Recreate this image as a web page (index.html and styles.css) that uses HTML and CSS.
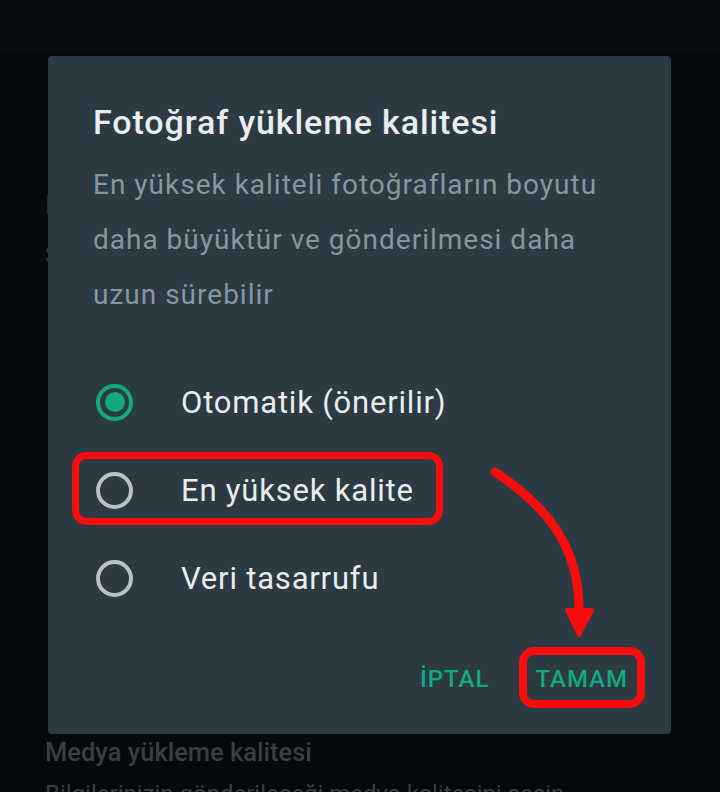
FILE: index.html
```html
<!DOCTYPE html>
<html lang="tr">

<head>
    <meta charset="UTF-8">
    <meta name="viewport" content="width=device-width, initial-scale=1.0">
    <title>Fotoğraf yükleme kalitesi</title>
    <link rel="stylesheet" href="styles.css">
</head>

<body>
    <div class="screen">
        <div class="toolbar"></div>
        <div class="setting">
            <div class="setting-title">Fotoğraf yükleme kalitesi</div>
            <div class="setting-sub">Standart</div>
        </div>
        <div class="section">Medya yükleme kalitesi</div>
        <div class="section-sub">Bilgilerinizin gönderileceği medya kalitesini seçin</div>
    </div>

    <div class="dialog">
        <h2 class="dialog-title">Fotoğraf yükleme kalitesi</h2>
        <p class="dialog-text">En yüksek kaliteli fotoğrafların boyutu daha büyüktür ve gönderilmesi daha uzun sürebilir</p>

        <div class="options">
            <div class="option"><span class="radio checked"></span>Otomatik (önerilir)</div>
            <div class="option"><span class="radio"></span>En yüksek kalite</div>
            <div class="option"><span class="radio"></span>Veri tasarrufu</div>
        </div>

        <div class="actions">
            <button class="action">İPTAL</button>
            <button class="action">TAMAM</button>
        </div>
    </div>

    <!-- red markup drawn over the screenshot -->
    <svg class="markup" width="720" height="792" viewBox="0 0 720 792">
        <rect x="75.5" y="455.5" width="364" height="66" rx="11" fill="none" stroke="#f70d0d" stroke-width="7" />
        <rect x="523" y="651" width="118" height="53" rx="11" fill="none" stroke="#f70d0d" stroke-width="8" />
        <path d="M495 472 C545 505, 580 545, 579 612" fill="none" stroke="#f70d0d" stroke-width="9" stroke-linecap="round" />
        <path d="M567 610 L592 610 L579 635 Z" fill="#f70d0d" stroke="#f70d0d" stroke-width="4" stroke-linejoin="round" />
    </svg>
</body>

</html>
```

FILE: styles.css
```css
body {
    margin: 0;
    width: 720px;
    height: 792px;
    overflow: hidden;
    background-color: #06090c;
    font-family: Roboto, "Noto Sans", sans-serif;
}

.screen {
    height: 792px;
    overflow: hidden;
}

.toolbar {
    height: 52px;
    background-color: #080c0f;
}

.setting {
    padding: 138px 0 0 45px;
    height: 440px;
}

.setting-title {
    font-size: 26px;
    color: #2a3034;
    line-height: 30px;
}

.setting-sub {
    font-size: 24px;
    color: #2a3034;
    line-height: 30px;
    margin-top: 20px;
}

.section {
    padding-left: 45px;
    margin-top: 106px;
    font-size: 25.5px;
    font-weight: 500;
    color: #393e42;
    line-height: 32px;
}

.section-sub {
    padding-left: 45px;
    margin-top: 10px;
    font-size: 24px;
    color: #393e42;
    line-height: 32px;
    white-space: nowrap;
}

.dialog {
    position: fixed;
    left: 48px;
    top: 56px;
    width: 623px;
    height: 678px;
    box-sizing: border-box;
    padding: 46px 31px 0 45px;
    background-color: #2b3a43;
    border-radius: 4px;
}

.dialog-title {
    margin: 0;
    font-size: 34px;
    font-weight: 500;
    line-height: 40px;
    letter-spacing: 0.9px;
    color: #e9edef;
}

.dialog-text {
    margin: 15px 0 0;
    font-size: 28px;
    line-height: 55px;
    letter-spacing: 1px;
    color: #8696a0;
    padding-right: 17px;
}

.options {
    margin-top: 36px;
}

.option {
    display: flex;
    align-items: center;
    height: 88px;
    font-size: 31px;
    letter-spacing: 0.8px;
    color: #e9edef;
}

.radio {
    width: 37px;
    height: 37px;
    box-sizing: border-box;
    border: 4px solid #b9c3c9;
    border-radius: 50%;
    margin: 0 48px 0 3px;
    display: flex;
    align-items: center;
    justify-content: center;
}

.radio.checked {
    border-color: #11a883;
}

.radio.checked::after {
    content: "";
    width: 20px;
    height: 20px;
    border-radius: 50%;
    background-color: #11a883;
}

.actions {
    display: flex;
    justify-content: flex-end;
    gap: 22px;
    margin-top: 33px;
}

.action {
    background: none;
    border: none;
    padding: 0 12px;
    height: 48px;
    font-family: Roboto, "Noto Sans", sans-serif;
    font-size: 24px;
    font-weight: 500;
    letter-spacing: 1px;
    color: #11a883;
}

.markup {
    position: absolute;
    left: 0;
    top: 0;
    pointer-events: none;
}
```
